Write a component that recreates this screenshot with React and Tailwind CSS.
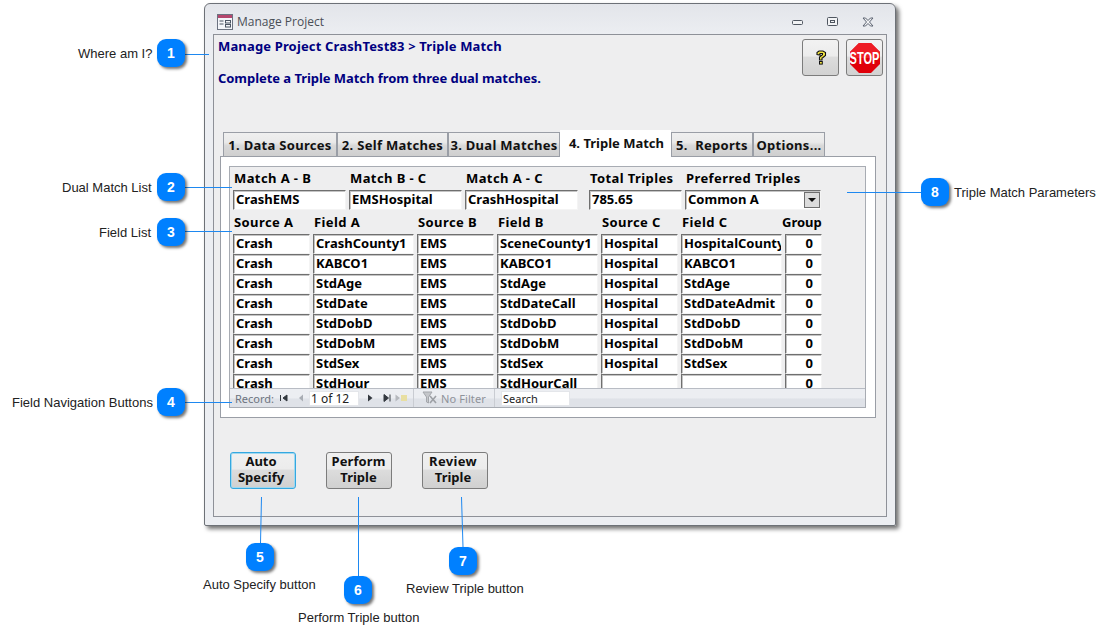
import React from 'react';

const callouts = [
  { n: 1, pos: 'left-[157px] top-[39px]' },
  { n: 2, pos: 'left-[157px] top-[173px]' },
  { n: 3, pos: 'left-[157px] top-[218px]' },
  { n: 4, pos: 'left-[157px] top-[388px]' },
  { n: 5, pos: 'left-[246px] top-[543px]' },
  { n: 6, pos: 'left-[344px] top-[576px]' },
  { n: 7, pos: 'left-[449px] top-[547px]' },
  { n: 8, pos: 'left-[921px] top-[178px]' },
];

const labels = [
  { text: 'Where am I?', pos: 'left-[78px] top-[45px]' },
  { text: 'Dual Match List', pos: 'left-[62px] top-[179px]' },
  { text: 'Field List', pos: 'left-[99px] top-[224px]' },
  { text: 'Field Navigation Buttons', pos: 'left-[12px] top-[394px]' },
  { text: 'Auto Specify button', pos: 'left-[203px] top-[576px]' },
  { text: 'Perform Triple button', pos: 'left-[298px] top-[609px]' },
  { text: 'Review Triple button', pos: 'left-[406px] top-[580px]' },
  { text: 'Triple Match Parameters', pos: 'left-[954px] top-[184px]' },
];

const tabs = [
  { text: '1. Data Sources', w: 'w-[114px]' },
  { text: '2. Self Matches', w: 'w-[111px]' },
  { text: '3. Dual Matches', w: 'w-[112px]' },
  { text: '4. Triple Match', w: 'w-[111px]', active: true },
  { text: '5.  Reports', w: 'w-[82px]' },
  { text: 'Options...', w: 'w-[72px]' },
];

const rows = [
  ['Crash', 'CrashCounty1', 'EMS', 'SceneCounty1', 'Hospital', 'HospitalCounty', '0'],
  ['Crash', 'KABCO1', 'EMS', 'KABCO1', 'Hospital', 'KABCO1', '0'],
  ['Crash', 'StdAge', 'EMS', 'StdAge', 'Hospital', 'StdAge', '0'],
  ['Crash', 'StdDate', 'EMS', 'StdDateCall', 'Hospital', 'StdDateAdmit', '0'],
  ['Crash', 'StdDobD', 'EMS', 'StdDobD', 'Hospital', 'StdDobD', '0'],
  ['Crash', 'StdDobM', 'EMS', 'StdDobM', 'Hospital', 'StdDobM', '0'],
  ['Crash', 'StdSex', 'EMS', 'StdSex', 'Hospital', 'StdSex', '0'],
  ['Crash', 'StdHour', 'EMS', 'StdHourCall', '', '', '0'],
];

const headers = ['Source A', 'Field A', 'Source B', 'Field B', 'Source C', 'Field C', 'Group'];

function Cell({ children, right, className = '' }) {
  return (
    <div className={`h-[20px] overflow-hidden whitespace-nowrap border border-t-[#6f6f6f] border-l-[#6f6f6f] border-r-[#f4f4f4] border-b-[#f4f4f4] bg-white pl-[2px] leading-[17px] text-black shadow-[inset_1px_1px_0_#c4c4c4] ${right ? 'pr-[8px] text-right' : ''} ${className}`}>
      {children}
    </div>
  );
}

function ActionButton({ line1, line2, focused, pad = '', line1Class = '' }) {
  return (
    <div className={`flex h-[37px] w-[66px] flex-col rounded-[3px] border bg-[linear-gradient(#f0f0f0_0%,#ececec_45%,#dcdcdc_50%,#d0d0d0_100%)] text-[13px] leading-[16px] font-bold text-[#111] ${focused ? 'border-[#35a8e0] shadow-[inset_0_0_0_1px_#9fd8f0]' : 'border-[#7c7c7c]'}`}>
      <div className={`flex h-full flex-col justify-center pb-[3px] text-center ${pad}`}>
        <div className={line1Class}>{line1}</div>
        <div>{line2}</div>
      </div>
    </div>
  );
}

function TitleIcon() {
  return (
    <svg width="16" height="16" viewBox="0 0 16 16">
      <rect x="0.5" y="0.5" width="15" height="15" fill="#f4f6fa" stroke="#6b7280" />
      <rect x="1" y="1" width="14" height="3" fill="#b5476e" />
      <path d="M2.5 7h4M2.5 10h4" stroke="#4b5563" fill="none" />
      <rect x="8.5" y="6.5" width="5" height="2.5" fill="none" stroke="#4b5563" />
      <rect x="8.5" y="10.5" width="5" height="2.5" fill="none" stroke="#4b5563" />
    </svg>
  );
}

function HelpGlyph() {
  return (
    <svg width="12" height="15" viewBox="0 0 12 15" className="block">
      <path d="M2 4.5 L2 2.5 L4 1 L8 1 L10.5 2.5 L10.5 5.5 L8 7.5 L7 8 L7 10 L4.5 10 L4.5 7 L7.5 4.8 L7.5 3.5 L5 3.5 L5 5 Z" fill="#f5e642" stroke="#111" strokeWidth="1.1" />
      <rect x="4.5" y="11.5" width="2.8" height="2.6" fill="#f5e642" stroke="#111" />
    </svg>
  );
}

function StopSign() {
  return (
    <div className="relative h-[30px] w-[30px]">
      <svg width="30" height="30" viewBox="0 0 30 30" className="absolute inset-0">
        <polygon points="9,0 21,0 30,9 30,21 21,30 9,30 0,21 0,9" fill="#e0000a" />
        <polygon points="9,0 21,0 30,9 30,15 0,15 0,9" fill="#ee1c24" />
      </svg>
      <div className="absolute inset-0 flex items-center justify-center font-['Liberation_Sans',sans-serif] text-[11px] font-bold text-[#fff] [transform:scaleY(1.5)]">
        STOP
      </div>
    </div>
  );
}

function NavBar() {
  return (
    <div className="flex h-[20px] items-center border-t border-b border-[#b8bcc4] bg-[linear-gradient(#eceef2_0%,#eceef2_50%,#dfe2e8_55%,#dfe2e8_100%)] font-['Noto_Sans',sans-serif] text-[11px] leading-[13px] font-normal text-[#6d7480]">
      <div className="ml-[5px] w-[44px] whitespace-nowrap">Record:</div>
      <svg width="12" height="10" viewBox="0 0 12 10" className="mr-[5px]">
        <path d="M1.5 2v6M8 2v6L4 5z" stroke="#33383f" fill="#33383f" />
      </svg>
      <svg width="10" height="10" viewBox="0 0 10 10" className="mr-[3px]">
        <path d="M7 1.5v7L3 5z" fill="#a9adb4" />
      </svg>
      <div className="h-[15px] w-[50px] whitespace-nowrap border border-[#e4e6ea] bg-white pl-[1px] text-[12px] text-[#222]">1 of 12</div>
      <svg width="10" height="10" viewBox="0 0 10 10" className="ml-[6px]">
        <path d="M3 1.5v7L7.5 5z" fill="#33383f" />
      </svg>
      <svg width="12" height="10" viewBox="0 0 12 10" className="ml-[6px]">
        <path d="M3 1.5v7L7.5 5zM9 1.5v7" fill="#33383f" stroke="#33383f" />
      </svg>
      <svg width="14" height="10" viewBox="0 0 14 10" className="ml-[1px]">
        <path d="M1.5 1.5v7L6 5z" fill="#b5b8bd" />
        <rect x="7" y="2" width="6" height="6" fill="#e8dfa2" />
      </svg>
      <div className="ml-[5px] h-full w-px bg-[#c9ccd2]" />
      <div className="flex w-[80px] items-center pl-[8px]">
        <svg width="16" height="14" viewBox="0 0 16 14" className="mr-[3px] shrink-0">
          <path d="M1 1h9L6.5 6v6L4.5 11V6z" fill="#c4c6ca" stroke="#a4a7ac" />
          <path d="M8 5l6 7M14 5l-6 7" stroke="#9da0a5" strokeWidth="1.6" />
        </svg>
        <span className="whitespace-nowrap text-[11px] tracking-[0.1px] text-[#8f939a]">No Filter</span>
      </div>
      <div className="h-full w-px bg-[#c9ccd2]" />
      <div className="ml-[6px] h-[15px] w-[69px] border border-[#e4e6ea] bg-white pl-[1px] text-[11px] text-[#222]">Search</div>
    </div>
  );
}

export default function App() {
  return (
    <div className="relative h-[641px] w-[1112px] overflow-hidden bg-white font-['Noto_Sans',sans-serif]">
      {/* access window */}
      <div className="ml-[204px] h-[527px] pt-[3px]">
        <div className="flex h-[523px] w-[692px] flex-col rounded-t-[6px] rounded-b-[2px] border border-[#6d7177] bg-[linear-gradient(#e3e5ea_0%,#eceef2_6%,#eceef2_100%)] shadow-[3px_3px_4px_rgba(0,0,0,0.55)]">
          <div className="flex h-[30px] shrink-0 items-center pl-[12px] pt-[5px]">
            <TitleIcon />
            <span className="ml-[4px] font-['Open_Sans',sans-serif] text-[12px] text-[#4a4f57]">Manage Project</span>
            <div className="ml-auto flex items-center">
              <svg width="12" height="6" viewBox="0 0 12 6" className="mt-[3px] mr-[23px]">
                <rect x="0.5" y="0.5" width="10" height="4" rx="1" fill="#f2f3f5" stroke="#4f5660" />
              </svg>
              <svg width="12" height="10" viewBox="0 0 12 10" className="mr-[23px]">
                <rect x="0.5" y="0.5" width="10" height="8" rx="1" fill="#f2f3f5" stroke="#4f5660" />
                <rect x="3.5" y="3.5" width="4" height="2" fill="none" stroke="#4f5660" />
              </svg>
              <svg width="12" height="10" viewBox="0 0 12 10" className="mr-[21px]">
                <path d="M1 1h2.5L6 3.5 8.5 1H11L7.5 5 11 9H8.5L6 6.5 3.5 9H1l3.5-4z" fill="#f2f3f5" stroke="#5b6270" />
              </svg>
            </div>
          </div>

          <div className="mx-[8px] h-[483px] border border-[#8e9198] bg-[#eeeeef] font-bold">
            <div className="flex h-[95px] justify-between pl-[4px] pr-[3px] pt-[3px]">
              <div className="text-[13px] leading-[16px] text-[#000080]">
                <div className="tracking-[0.15px]">Manage Project CrashTest83 &gt; Triple Match</div>
                <div className="mt-[16px] tracking-[-0.05px]">Complete a Triple Match from three dual matches.</div>
              </div>
              <div className="mt-[1px] flex gap-[7px]">
                <div className="flex h-[37px] w-[37px] items-center justify-center rounded-[3px] border border-[#7c7c7c] bg-[linear-gradient(#f2f2f2_0%,#ececec_45%,#dcdcdc_50%,#d2d2d2_100%)]">
                  <HelpGlyph />
                </div>
                <div className="flex h-[37px] w-[37px] items-center justify-center rounded-[3px] border border-[#7c7c7c] bg-[linear-gradient(#f2f2f2_0%,#ececec_45%,#dcdcdc_50%,#d2d2d2_100%)]">
                  <StopSign />
                </div>
              </div>
            </div>

            <div className="flex h-[26px] items-end pl-[9px]">
              {tabs.map((t) => (
                <div
                  key={t.text}
                  className={`flex items-center justify-center whitespace-pre border border-b-0 border-[#9a9ea6] text-[13px] ${t.w} ${t.active ? 'relative z-10 -mb-px h-[27px] border-transparent bg-white pl-[2px] text-[#111]' : 'h-[24px] bg-[linear-gradient(#efefef_0%,#eaeaea_40%,#d8d8d8_55%,#cfcfcf_100%)] pt-[2px] tracking-[0.3px] text-[#111]'}`}
                >
                  {t.text}
                </div>
              ))}
            </div>

            <div className="ml-[6px] h-[262px] w-[656px] border border-[#9a9ea6] bg-white p-[8px] pt-[9px]">
              <div className="h-[242px] w-[637px] overflow-hidden border border-[#a8acb3] bg-[#eeeeef] text-[13px]">
                <div className="h-[221px] overflow-hidden pl-[3px]">
                  <div className="mt-[2px] grid grid-cols-[113px_113px_113px_5px_93px_136px] gap-x-[3px]">
                    <div className="h-[21px] whitespace-nowrap pl-[1px] leading-[18px] tracking-[0.4px]">Match A - B</div>
                    <div className="h-[21px] whitespace-nowrap pl-[1px] leading-[18px] tracking-[0.4px]">Match B - C</div>
                    <div className="h-[21px] whitespace-nowrap pl-[1px] leading-[18px] tracking-[0.4px]">Match A - C</div>
                    <div />
                    <div className="h-[21px] whitespace-nowrap pl-[1px] leading-[18px] tracking-[0.4px]">Total Triples</div>
                    <div className="h-[21px] whitespace-nowrap pl-[1px] leading-[18px] tracking-[0.4px]">Preferred Triples</div>
                    <Cell>CrashEMS</Cell>
                    <Cell>EMSHospital</Cell>
                    <Cell>CrashHospital</Cell>
                    <div />
                    <Cell>785.65</Cell>
                    <div className="relative">
                      <Cell>Common A</Cell>
                      <div className="absolute right-[1px] top-[2px] flex h-[16px] w-[16px] items-center justify-center border border-[#6f6f6f] bg-[#dcdcdc]">
                        <svg width="8" height="4" viewBox="0 0 8 4"><path d="M0 0h8L4 4z" fill="#111" /></svg>
                      </div>
                    </div>
                  </div>
                  <div className="mt-[3px] grid grid-cols-[77px_101px_77px_101px_77px_101px_37px] gap-x-[3px]">
                    {headers.map((h, i) => (
                      <div key={h} className={`h-[21px] whitespace-nowrap leading-[18px] ${i === 6 ? '-ml-[3px]' : 'pl-[1px] tracking-[0.4px]'}`}>{h}</div>
                    ))}
                    {rows.map((row, r) =>
                      row.map((v, c) => (
                        <Cell key={`${r}-${c}`} right={c === 6}>{v}</Cell>
                      ))
                    )}
                  </div>
                </div>
                <NavBar />
              </div>
            </div>

            <div className="ml-[16px] mt-[34px] flex gap-[30px]">
              <ActionButton line1="Auto" line2="Specify" focused pad="pr-[4px]" />
              <ActionButton line1="Perform" line2="Triple" pad="pr-[1px]" line1Class="tracking-[0.1px]" />
              <ActionButton line1="Review" line2="Triple" pad="pr-[4px]" line1Class="tracking-[0.3px]" />
            </div>
          </div>
        </div>
      </div>

      {/* callout leader lines */}
      <svg width="1112" height="641" className="pointer-events-none absolute inset-0">
        <g stroke="#1e88f0" strokeWidth="1">
          <line x1="185" y1="54.5" x2="209" y2="54.5" />
          <line x1="185" y1="187.5" x2="232" y2="187.5" />
          <line x1="185" y1="231.5" x2="232" y2="231.5" />
          <line x1="185" y1="402.5" x2="232" y2="402.5" />
          <line x1="261.5" y1="497" x2="260.5" y2="543" />
          <line x1="358.5" y1="497" x2="358.5" y2="576" />
          <line x1="461.5" y1="497" x2="463" y2="547" />
          <line x1="847" y1="192.5" x2="921" y2="192.5" />
        </g>
      </svg>

      {callouts.map((c) => (
        <div
          key={c.n}
          className={`absolute flex h-[28px] w-[28px] items-center justify-center rounded-[9px] bg-[#0080ff] font-['Liberation_Sans',sans-serif] text-[14px] font-bold text-white shadow-[2px_2px_3px_rgba(0,0,0,0.55)] ${c.pos}`}
        >
          {c.n}
        </div>
      ))}
      {labels.map((l) => (
        <div key={l.text} className={`absolute whitespace-nowrap font-['Liberation_Sans',sans-serif] text-[13px] leading-[18px] text-[#222] ${l.pos}`}>
          {l.text}
        </div>
      ))}
    </div>
  );
}
